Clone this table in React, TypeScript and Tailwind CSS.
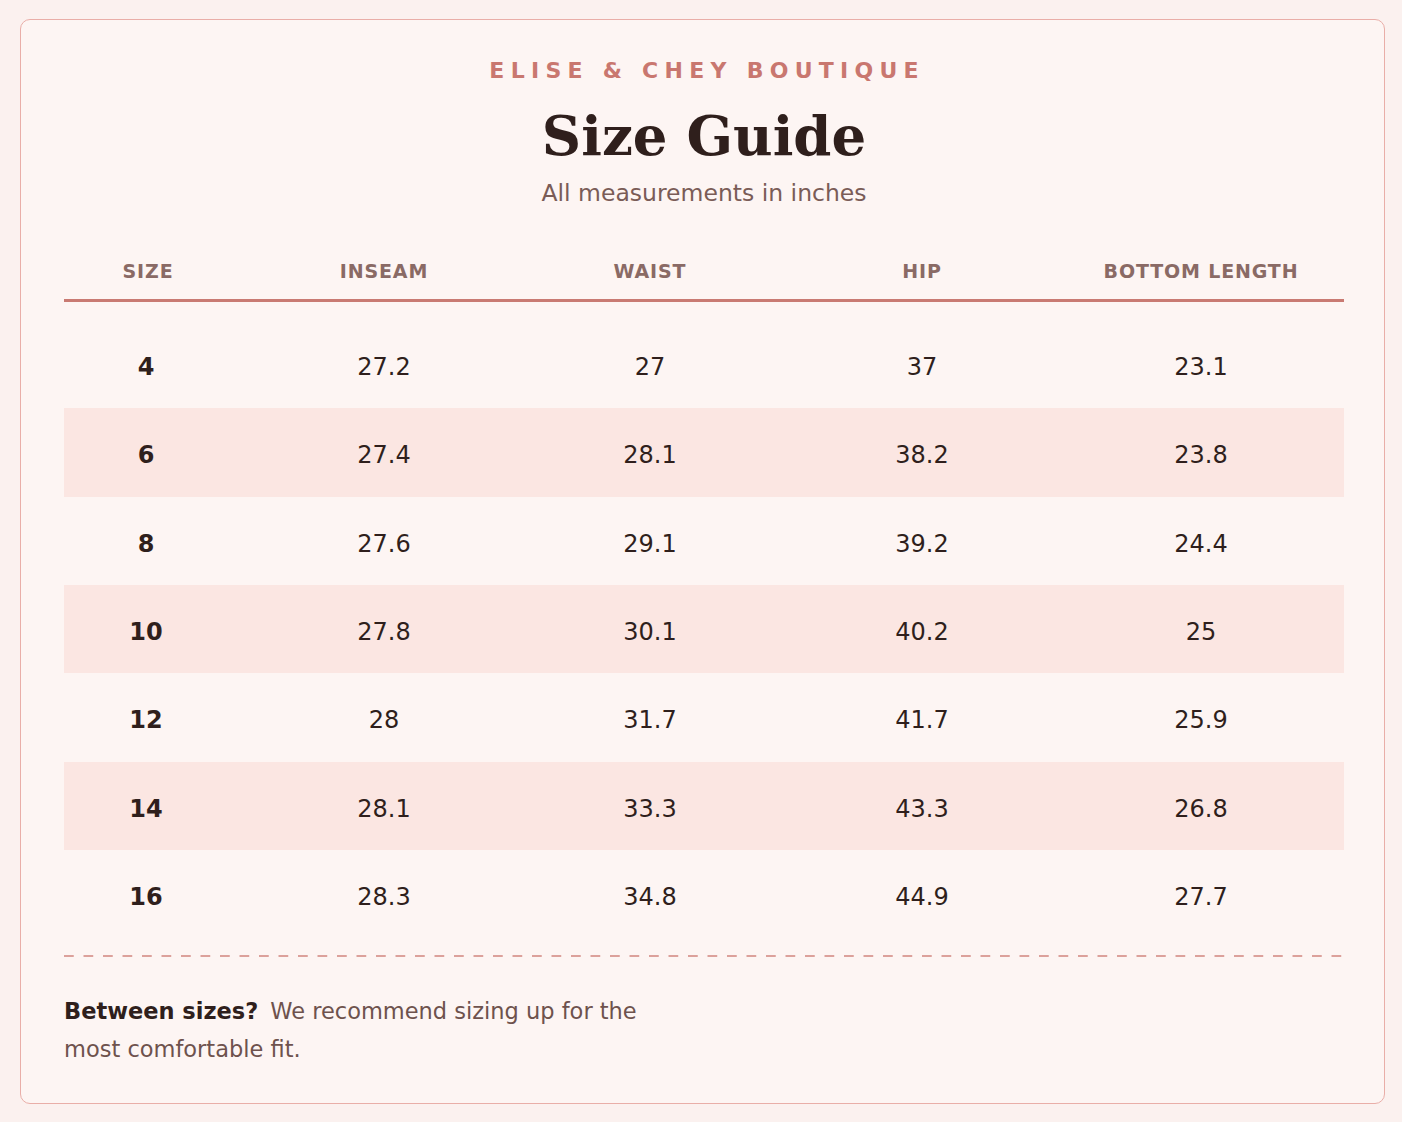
import React from "react";

const rows: [string, string, string, string, string][] = [
  ["4", "27.2", "27", "37", "23.1"],
  ["6", "27.4", "28.1", "38.2", "23.8"],
  ["8", "27.6", "29.1", "39.2", "24.4"],
  ["10", "27.8", "30.1", "40.2", "25"],
  ["12", "28", "31.7", "41.7", "25.9"],
  ["14", "28.1", "33.3", "43.3", "26.8"],
  ["16", "28.3", "34.8", "44.9", "27.7"],
];

const headers = ["SIZE", "INSEAM", "WAIST", "HIP", "BOTTOM LENGTH"];

export default function App() {
  return (
    <div className="min-h-screen bg-[#fbf1ef] pt-[19px] pl-[20px] font-['DejaVu_Sans',sans-serif]">
      <div className="w-[1365px] rounded-[10px] border border-[#e9aea8] bg-[#fdf5f3] pl-[43px] pr-[40px] pt-[37px] pb-[35px]">
        <div className="flex flex-col items-center">
          <div className="text-[22px] leading-[28px] font-bold tracking-[0.285em] pl-[0.285em] text-[#c9776f]">
            ELISE &amp; CHEY BOUTIQUE
          </div>
          <h1 className="mt-[18px] font-['DejaVu_Serif',serif] text-[54.5px] leading-[67px] font-bold text-[#2f1f1c]">
            Size Guide
          </h1>
          <div className="mt-[8px] text-[23.5px] leading-[30px] text-[#7a5c57]">
            All measurements in inches
          </div>
        </div>

        <div className="mt-[51px] w-[1280px]">
          <div className="grid grid-cols-[168px_304px_228px_316px_242px] border-b-[3px] border-[#c97a72] pb-[16px]">
            {headers.map((h) => (
              <div
                key={h}
                className="text-center text-[19px] leading-[24px] font-bold tracking-[0.045em] text-[#8a6a65]"
              >
                {h}
              </div>
            ))}
          </div>

          <div className="mt-[18px]">
            {rows.map((r, i) => (
              <div
                key={r[0]}
                className={
                  "grid grid-cols-[168px_304px_228px_316px_242px] h-[88.33px] items-center " +
                  (i % 2 === 1 ? "bg-[#fbe6e2]" : "")
                }
              >
                {r.map((c, j) => (
                  <div
                    key={j}
                    className={
                      "text-center text-[24px] leading-[30px] pt-[6px] text-[#2f1f1c] " +
                      (j === 0 ? "font-bold pr-[4px]" : "")
                    }
                  >
                    {c}
                  </div>
                ))}
              </div>
            ))}
          </div>

          <div className="mt-[17px] h-[2px] w-full bg-[linear-gradient(to_right,#dca19b_0_10px,transparent_10px_19.5px)] bg-[length:19.5px_2px] bg-repeat-x" />

          <p className="mt-[35px] max-w-[600px] text-[22.5px] leading-[38px] text-[#6e524d]">
            <strong className="font-bold text-[#2f1f1c]">Between sizes?</strong>
            <span className="pl-[12px]">We recommend sizing up for the most comfortable fit.</span>
          </p>
        </div>
      </div>
    </div>
  );
}
